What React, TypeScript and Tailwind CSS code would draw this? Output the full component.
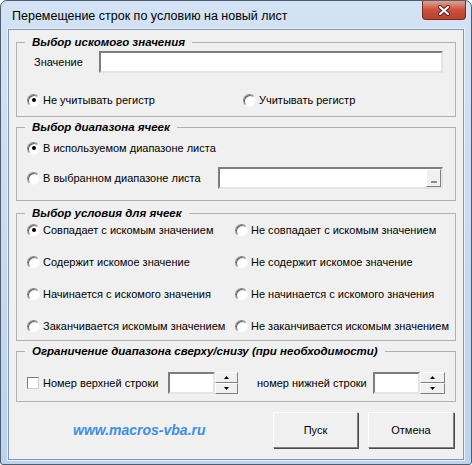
import type { ReactNode } from "react";

const sunken =
  "bg-white border-2 border-t-[#7d7d7d] border-l-[#7d7d7d] border-r-[#e4e4e4] border-b-[#e4e4e4]";

const raised =
  "bg-[#f0f0f0] border border-t-white border-l-white border-r-[#808080] border-b-[#808080]";

function Radio({ checked, label }: { checked?: boolean; label: string }) {
  return (
    <label className="flex items-center gap-[3px] h-[16px] whitespace-nowrap">
      <span className="shrink-0 flex items-center justify-center w-[13px] h-[13px] rounded-full bg-white border border-t-[#8a8a8a] border-l-[#8a8a8a] border-r-[#f6f6f6] border-b-[#f6f6f6] shadow-[inset_1px_1px_0_#5f5f5f]">
        {checked && <span className="w-[4px] h-[4px] rounded-full bg-black" />}
      </span>
      <span>{label}</span>
    </label>
  );
}

function Group({ title, className, children }: { title: string; className: string; children: ReactNode }) {
  return (
    <fieldset className={`border border-[#b1b1b1] ${className}`}>
      <legend className="ml-[8px] px-[7px] text-[11.5px] leading-[14px] font-bold italic whitespace-nowrap">{title}</legend>
      {children}
    </fieldset>
  );
}

function Spin({ w }: { w: string }) {
  return (
    <div className="flex items-center shrink-0">
      <div className={`w-[47px] h-[22px] ${sunken}`} />
      <div className={`flex flex-col h-[22px] ${w}`}>
        <span className={`flex-1 flex items-center justify-center ${raised}`}>
          <svg width="5" height="3" viewBox="0 0 5 3">
            <polygon points="2.5,0 5,3 0,3" fill="#000" />
          </svg>
        </span>
        <span className={`flex-1 flex items-center justify-center ${raised}`}>
          <svg width="5" height="3" viewBox="0 0 5 3">
            <polygon points="0,0 5,0 2.5,3" fill="#000" />
          </svg>
        </span>
      </div>
    </div>
  );
}

export default function App() {
  return (
    <div className="w-[472px] h-[465px] bg-gradient-to-b from-[#d3e3f5] to-[#bcd3ee] border border-[#4f5d70] rounded-t-[7px] rounded-b-[3px] font-['Liberation_Sans',Arial,sans-serif] text-[11px] text-black">
      <div className="h-[28px] flex justify-between">
        <div className="pl-[11px] pt-[7px] text-[12.5px] leading-[16px]">
          Перемещение строк по условию на новый лист
        </div>
        <div className="mr-[5px] w-[44px] h-[19px] rounded-b-[4px] border border-t-0 border-[#7a2a20] bg-gradient-to-b from-[#e1a192] via-[#c94f3c] to-[#b9412d] flex items-center justify-center">
          <svg width="14" height="11" viewBox="0 0 14 11">
            <path d="M3 2 L11 9 M11 2 L3 9" stroke="#5a1c14" strokeWidth="4" strokeLinecap="round" />
            <path d="M3 2 L11 9 M11 2 L3 9" stroke="#ffffff" strokeWidth="2.2" strokeLinecap="round" />
          </svg>
        </div>
      </div>

      <div className="mx-[7px] h-[431px] bg-[#f0f0f0] border border-[#8497b0] shadow-[0_0_0_1px_#e8f0fa] px-[7px] pt-[5px]">
        <Group title="Выбор искомого значения" className="pb-[8px]">
          <div className="mt-[2px] flex items-center">
            <span className="pl-[17px] w-[82px]">Значение</span>
            <div className={`w-[344px] h-[22px] ${sunken}`} />
          </div>
          <div className="mt-[19px] pl-[10px] flex">
            <div className="w-[216px]">
              <Radio checked label="Не учитывать регистр" />
            </div>
            <Radio label="Учитывать регистр" />
          </div>
        </Group>

        <Group title="Выбор диапазона ячеек" className="mt-[3px] pb-[11px]">
          <div className="mt-[6px] pl-[10px]">
            <Radio checked label="В используемом диапазоне листа" />
          </div>
          <div className="mt-[11px] pl-[10px] flex items-center">
            <div className="w-[191px]">
              <Radio label="В выбранном диапазоне листа" />
            </div>
            <div className={`w-[225px] h-[22px] flex justify-end ${sunken}`}>
              <span className={`w-[15px] h-full flex items-end justify-center pb-[3px] ${raised}`}>
                <span className="w-[6px] h-[2px] bg-[#8c8c8c]" />
              </span>
            </div>
          </div>
        </Group>

        <Group title="Выбор условия для ячеек" className="mt-[5px] pb-[6px]">
          <div className="mt-[2px] pl-[10px] grid grid-cols-[208px_1fr] gap-y-[16px]">
            <Radio checked label="Совпадает с искомым значением" />
            <Radio label="Не совпадает с искомым значением" />
            <Radio label="Содержит искомое значение" />
            <Radio label="Не содержит искомое значение" />
            <Radio label="Начинается с искомого значения" />
            <Radio label="Не начинается с искомого значения" />
            <Radio label="Заканчивается искомым значением" />
            <Radio label="Не заканчивается искомым значением" />
          </div>
        </Group>

        <Group title="Ограничение диапазона сверху/снизу (при необходимости)" className="mt-[3px] pb-[7px]">
          <div className="mt-[14px] pl-[10px] flex items-center whitespace-nowrap">
            <label className="w-[141px] shrink-0 flex items-center gap-[4px]">
              <span className="shrink-0 w-[12px] h-[12px] bg-white border border-t-[#7a7a7a] border-l-[#7a7a7a] border-r-[#cfcfcf] border-b-[#cfcfcf]" />
              <span>Номер верхней строки</span>
            </label>
            <Spin w="w-[23px]" />
            <span className="ml-[19px] w-[116px] shrink-0">номер нижней строки</span>
            <Spin w="w-[25px]" />
          </div>
        </Group>

        <div className="mt-[10px] flex items-center pr-[2px]">
          <span className="pl-[57px] text-[14px] font-bold italic text-[#3e8fe2]">www.macros-vba.ru</span>
          <div className="ml-auto flex gap-[10px]">
            <button className={`w-[85px] h-[36px] shadow-[1px_1px_0_#4a4a4a] ${raised}`}>Пуск</button>
            <button className={`w-[86px] h-[36px] shadow-[1px_1px_0_#4a4a4a] ${raised}`}>Отмена</button>
          </div>
        </div>
      </div>
    </div>
  );
}
